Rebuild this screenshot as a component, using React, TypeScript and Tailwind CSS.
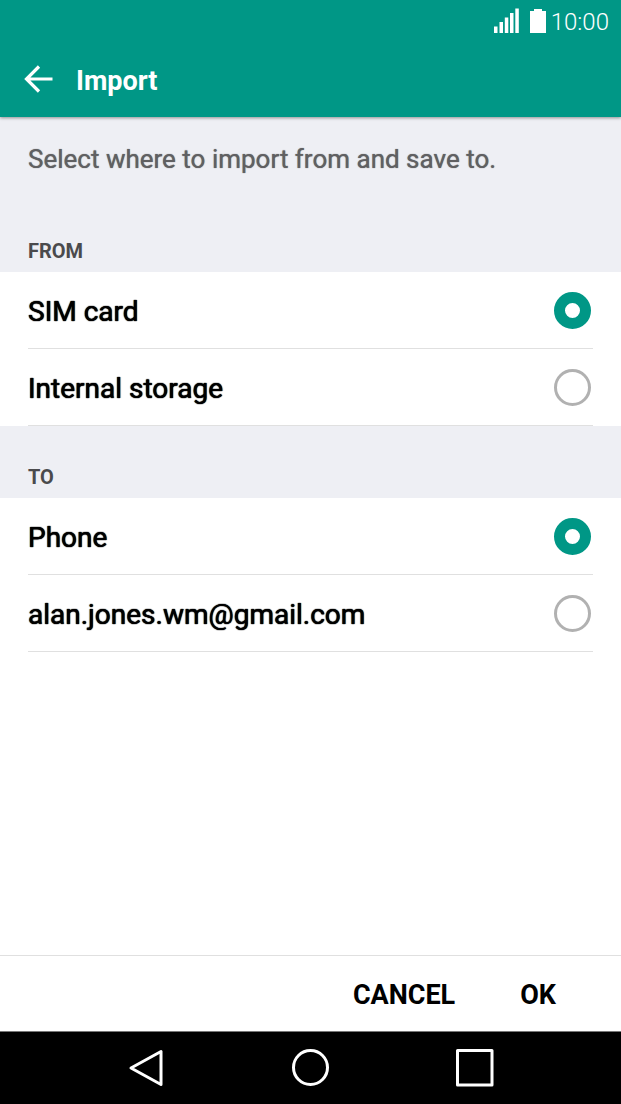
import { useState } from "react";

type RadioGroupProps = {
  name: string;
  title: string;
  options: string[];
  value: string;
  onChange: (value: string) => void;
};

const RadioGroup = ({ name, title, options, value, onChange }: RadioGroupProps) => {
  return (
    <section aria-labelledby={`${name}-title`}>
      <div className="flex h-[72px] items-end bg-[#eeeff4] px-7 pb-[7px]">
        <h2 id={`${name}-title`} className="text-[20px] leading-7 font-bold text-[#4a4a4c]">
          {title}
        </h2>
      </div>
      <div className="bg-white px-7">
        {options.map((option) => (
          <label
            key={option}
            className="flex h-[77px] cursor-pointer items-center justify-between border-b border-[#e0e0e0] pr-0.5 text-[28px] leading-8 text-black text-shadow-[0_0_1px_#000,0_0_1px_#000]"
          >
            <span className="pt-1">{option}</span>
            <input
              type="radio"
              name={name}
              value={option}
              checked={value === option}
              onChange={() => onChange(option)}
              className="size-[37px] shrink-0 appearance-none rounded-full border-[3px] border-[#b1b1b1] bg-white checked:border-[11px] checked:border-[#009786]"
            />
          </label>
        ))}
      </div>
    </section>
  );
};

const StatusBar = () => {
  return (
    <div className="flex h-[42px] items-center justify-end pr-3 text-white">
      <svg className="mr-2.5" width="26" height="26" viewBox="0 0 26 26" fill="currentColor" aria-hidden="true">
        <rect x="0" y="18.5" width="3.5" height="6.5" />
        <rect x="5.5" y="14" width="3.5" height="11" />
        <rect x="10.8" y="9.5" width="3.5" height="15.5" />
        <rect x="16" y="5" width="3.5" height="20" />
        <rect x="21.3" y="0.5" width="3.5" height="24.5" />
      </svg>
      <svg className="mr-[5px]" width="16" height="26" viewBox="0 0 16 26" fill="currentColor" aria-hidden="true">
        <path d="M4 1h8v2h4v22H0V3h4z" />
      </svg>
      <span className="pt-0.5 text-[24px] leading-7 font-light">10:00</span>
    </div>
  );
};

const NavBar = () => {
  return (
    <nav className="flex h-[73px] justify-center border-t border-[#777] bg-black text-white">
      <button type="button" aria-label="Back" className="flex w-[164px] items-center justify-center">
        <svg width="38" height="38" viewBox="0 0 38 38" fill="none" stroke="currentColor" strokeWidth="3">
          <path d="M33 2.5V35.5L3 19z" strokeLinejoin="round" />
        </svg>
      </button>
      <button type="button" aria-label="Home" className="flex w-[164px] items-center justify-center">
        <svg width="38" height="38" viewBox="0 0 38 38" fill="none" stroke="currentColor" strokeWidth="3">
          <circle cx="18.5" cy="18.5" r="17" />
        </svg>
      </button>
      <button type="button" aria-label="Recent apps" className="flex w-[164px] items-center justify-center">
        <svg width="38" height="38" viewBox="0 0 38 38" fill="none" stroke="currentColor" strokeWidth="3">
          <rect x="1.5" y="1.5" width="34.5" height="34.5" strokeLinejoin="round" />
        </svg>
      </button>
    </nav>
  );
};

export default function App() {
  const [from, setFrom] = useState("SIM card");
  const [to, setTo] = useState("Phone");

  return (
    <div className="flex min-h-screen flex-col bg-white font-[Roboto,sans-serif]">
      <header className="relative bg-[#009786] shadow-[0_1px_3px_rgba(0,0,0,0.4)]">
        <StatusBar />
        <div className="flex h-[75px] items-center gap-[23px] px-6 text-white">
          <button type="button" aria-label="Go back" className="-mt-px">
            <svg width="29" height="28" viewBox="0 0 29 28" fill="none" stroke="currentColor" strokeWidth="3.2">
              <path d="M15 1.5L2.5 14L15 26.5M2.5 14H28.5" />
            </svg>
          </button>
          <h1 className="pt-0.5 text-[27px] leading-8 font-bold">Import</h1>
        </div>
      </header>

      <main className="flex-1">
        <p className="h-[83px] bg-[#eeeff4] px-7 pt-[26px] text-[26px] leading-8 text-[#606062] text-shadow-[0_0_1px_#606062]">
          Select where to import from and save to.
        </p>
        <RadioGroup
          name="from"
          title="FROM"
          options={["SIM card", "Internal storage"]}
          value={from}
          onChange={setFrom}
        />
        <RadioGroup
          name="to"
          title="TO"
          options={["Phone", "alan.jones.wm@gmail.com"]}
          value={to}
          onChange={setTo}
        />
      </main>

      <footer className="flex h-[76px] items-center justify-end border-t border-[#e0e0e0] pt-1 pr-8 text-[27px] font-bold text-black">
        <button type="button" className="px-8">
          CANCEL
        </button>
        <button type="button" className="px-[33px]">
          OK
        </button>
      </footer>
      <NavBar />
    </div>
  );
}
